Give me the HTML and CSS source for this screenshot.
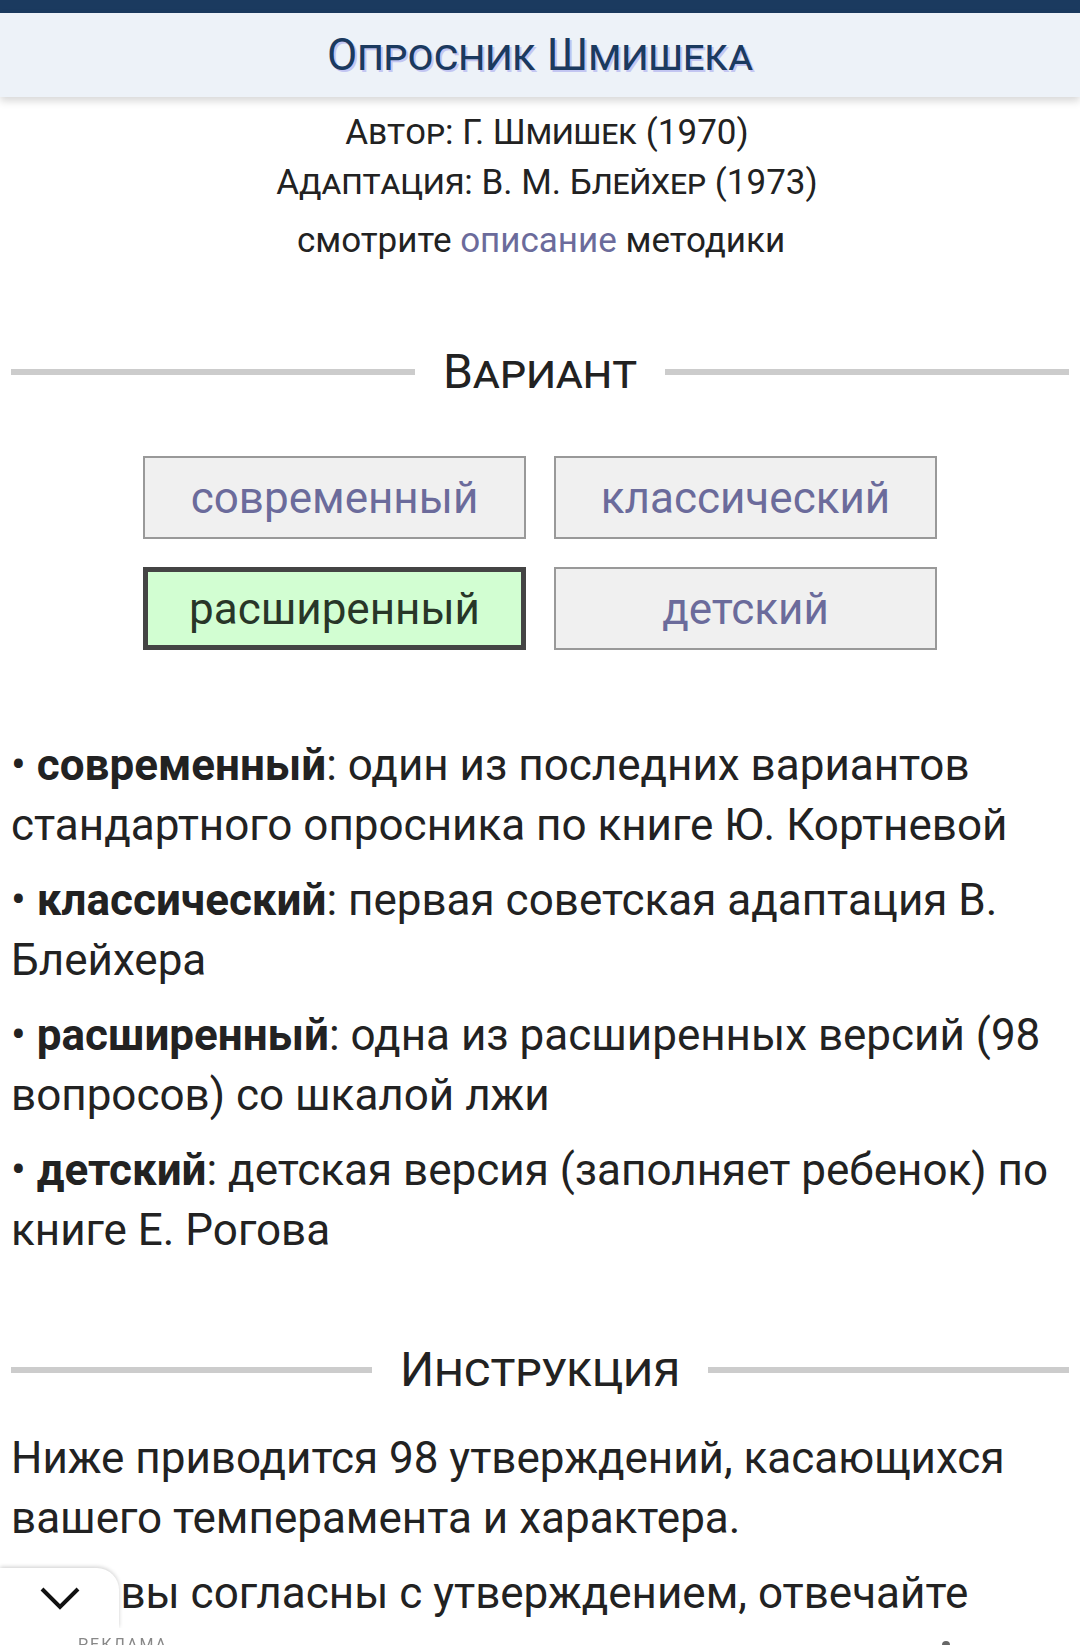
FILE: index.html
```html
<!DOCTYPE html>
<html lang="ru">
<head>
<meta charset="utf-8">
<title>Опросник Шмишека</title>
<link rel="stylesheet" href="styles.css">
</head>
<body>
<div class="topbar"></div>
<header class="header">
  <h1 class="title">Опросник Шмишека</h1>
</header>
<main class="page">
  <div class="credits">
    <div class="credit">Автор: Г. Шмишек (1970)</div>
    <div class="credit">Адаптация: В. М. Блейхер (1973)</div>
    <p class="see">смотрите <a href="#" class="link">описание</a> методики</p>
  </div>

  <h2 class="section"><span class="section-line"></span><span class="section-text">Вариант</span><span class="section-line"></span></h2>

  <div class="variants">
    <button class="variant">современный</button>
    <button class="variant">классический</button>
    <button class="variant variant-active">расширенный</button>
    <button class="variant">детский</button>
  </div>

  <div class="descs">
    <p class="desc">• <b>современный</b>: один из последних вариантов стандартного опросника по книге Ю. Кортневой</p>
    <p class="desc">• <b>классический</b>: первая советская адаптация В. Блейхера</p>
    <p class="desc">• <b>расширенный</b>: одна из расширенных версий (98 вопросов) со шкалой лжи</p>
    <p class="desc">• <b>детский</b>: детская версия (заполняет ребенок) по книге Е. Рогова</p>
  </div>

  <h2 class="section section-instr"><span class="section-line"></span><span class="section-text">Инструкция</span><span class="section-line"></span></h2>

  <p class="instr instr-first">Ниже приводится 98 утверждений, касающихся вашего темперамента и характера.</p>
  <p class="instr">Если вы согласны с утверждением, отвечайте «да», если не согласны — «нет».</p>
</main>

<div class="adbar">
  <div class="ad-tab">
    <svg class="chev" width="40" height="24" viewBox="0 0 40 24"><path d="M2 3 L20 21 L38 3" fill="none" stroke="#111" stroke-width="4"/></svg>
  </div>
  <div class="ad-body">
    <span class="ad-label">РЕКЛАМА</span>
    <span class="ad-dot"></span>
  </div>
</div>
</body>
</html>
```

FILE: styles.css
```css
html, body {
  margin: 0;
  padding: 0;
  background: #fff;
}
body {
  font-family: Roboto, "Noto Sans", Arial, sans-serif;
  color: #222;
}
.topbar {
  height: 13px;
  background: #1b3a5f;
}
.header {
  height: 84px;
  background: #edf2f8;
  box-shadow: 0 4px 8px rgba(0, 0, 0, 0.16);
  display: flex;
  align-items: center;
  justify-content: center;
  position: relative;
}
.title {
  margin: 0;
  font-size: 44px;
  font-weight: 400;
  font-variant: small-caps;
  color: #1b3a5f;
  text-shadow: 2px 2px 0 #c3c6f2;
  line-height: 1;
}
.page {
  padding: 0 11px;
}
.credits {
  text-align: center;
  padding-top: 11px;
}
.credit {
  font-size: 35px;
  font-variant: small-caps;
  line-height: 50px;
  padding-left: 14px;
}
.see {
  margin: 8px 0 0;
  font-size: 35px;
  line-height: 50px;
  padding-left: 2px;
}
.link {
  color: #6b6b9b;
  text-decoration: none;
}
.section {
  display: flex;
  align-items: center;
  gap: 28px;
  margin: 76px 0 0;
  font-size: 48px;
  font-weight: 400;
  font-variant: small-caps;
  line-height: 60px;
}
.section-line {
  flex: 1;
  height: 6px;
  background: #cccccc;
}
.section-text {
  color: #222;
}
.variants {
  display: grid;
  grid-template-columns: 383px 383px;
  gap: 28px;
  justify-content: center;
  margin-top: 54px;
}
.variant {
  height: 83px;
  box-sizing: border-box;
  background: #f0f0f0;
  border: 2px solid #999;
  font-family: Roboto, "Noto Sans", Arial, sans-serif;
  font-size: 44px;
  color: #6b6b9b;
  padding: 0;
}
.variant-active {
  background: #d2fed2;
  border: 5px solid #444;
  color: #283628;
}
.descs {
  margin-top: 85px;
}
.desc {
  margin: 0 0 15px;
  font-size: 44px;
  line-height: 60px;
}
.desc b {
  font-weight: 700;
}
.section-instr {
  margin-top: 80px;
}
.instr {
  margin: 15px 0 0;
  font-size: 44px;
  line-height: 60px;
}
.instr-first {
  margin-top: 28px;
}
.adbar {
  position: fixed;
  left: 0;
  right: 0;
  bottom: 0;
}
.ad-tab {
  width: 119px;
  height: 60px;
  background: #fff;
  border-top-right-radius: 22px;
  box-shadow: 0 -1px 4px rgba(0, 0, 0, 0.2);
  display: flex;
  align-items: center;
  justify-content: center;
}
.ad-body {
  height: 17px;
  background: #fff;
  position: relative;
  display: flex;
  align-items: flex-end;
  justify-content: space-between;
  padding: 0 130px 0 78px;
}
.ad-label {
  font-size: 16px;
  letter-spacing: 2px;
  color: #888;
  line-height: 1;
  transform: translateY(8px);
}
.ad-dot {
  width: 8px;
  height: 8px;
  border-radius: 50%;
  background: #666;
  transform: translateY(4px);
}
```
